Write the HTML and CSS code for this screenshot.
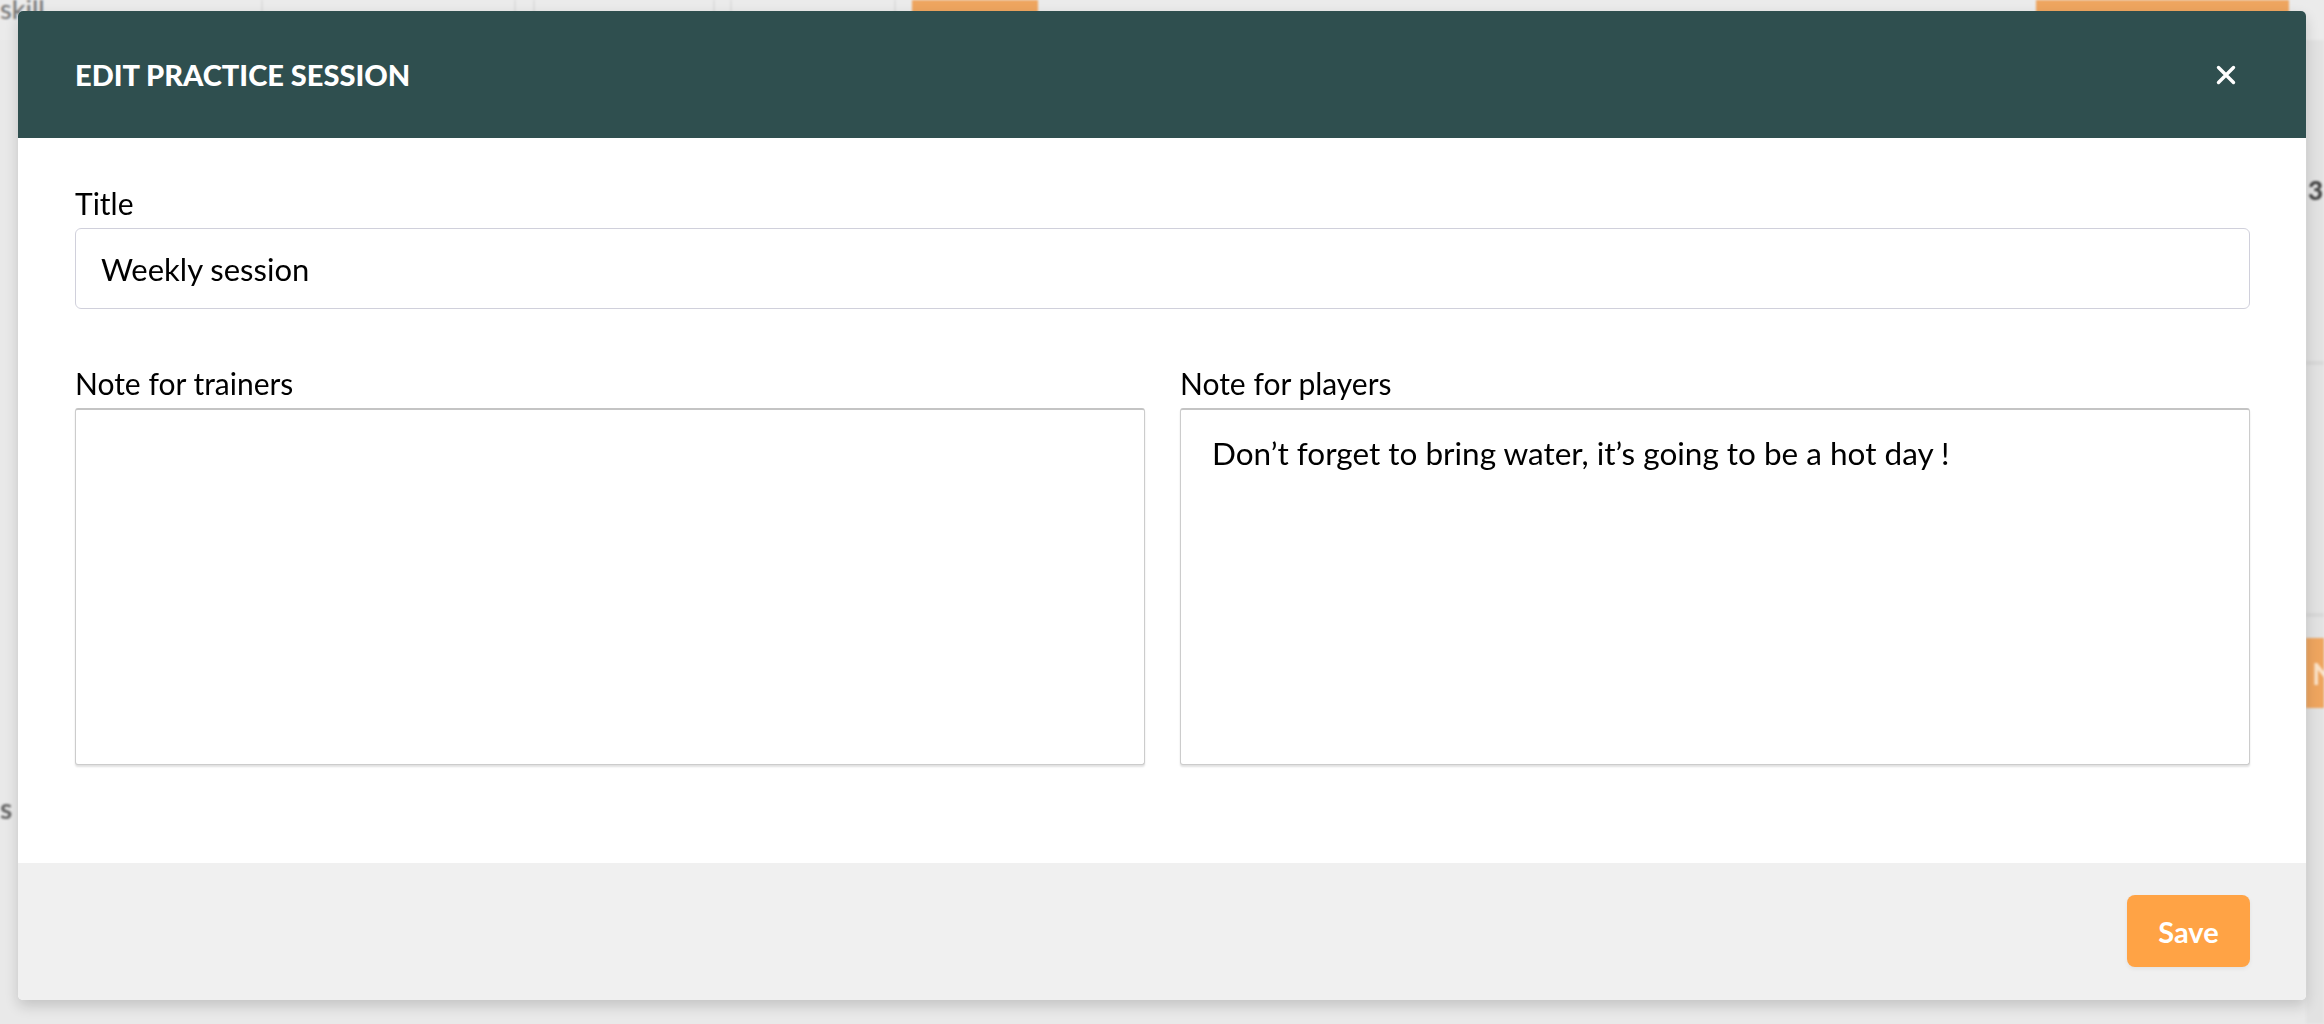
FILE: index.html
```html
<!DOCTYPE html>
<html lang="en">
<head>
<meta charset="utf-8">
<title>Edit practice session</title>
<link rel="stylesheet" href="styles.css">
</head>
<body>
<div class="page">
  <div class="page-top">
    <div class="cell cell-a"><span class="skill">skill</span></div>
    <div class="cell cell-b"></div>
    <div class="cell cell-c"></div>
    <div class="cell cell-d"></div>
    <div class="cell cell-e"></div>
    <div class="cell cell-f"></div>
    <div class="cell cell-btn"></div>
    <div class="cell cell-g"></div>
    <div class="cell cell-btn2"></div>
    <div class="cell cell-h"></div>
  </div>
  <div class="page-main">
    <div class="page-left"><span class="left-s">s</span></div>
    <div class="page-right">
      <span class="num">3</span>
      <div class="sep sep-1"></div>
      <div class="sep sep-2"></div>
      <div class="side-btn">N</div>
    </div>
  </div>
</div>

<div class="overlay">
  <div class="modal">
    <div class="modal-header">
      <h1 class="modal-title">Edit practice session</h1>
      <button class="close" aria-label="Close">
        <svg width="20" height="20" viewBox="0 0 20 20"><path d="M2.5 2.5 L17.5 17.5 M17.5 2.5 L2.5 17.5" stroke="#fff" stroke-width="3.4" stroke-linecap="round" fill="none"/></svg>
      </button>
    </div>
    <div class="modal-body">
      <div class="field">
        <label class="label">Title</label>
        <input class="text-input" type="text" value="Weekly session">
      </div>
      <div class="notes">
        <div class="field note">
          <label class="label">Note for trainers</label>
          <textarea class="textarea"></textarea>
        </div>
        <div class="field note">
          <label class="label">Note for players</label>
          <textarea class="textarea">Don’t forget to bring water, it’s going to be a hot day !</textarea>
        </div>
      </div>
    </div>
    <div class="modal-footer">
      <button class="save">Save</button>
    </div>
  </div>
</div>
</body>
</html>
```

FILE: styles.css
```css
* { box-sizing: border-box; }
html, body { margin: 0; padding: 0; }
body {
  width: 2324px;
  height: 1024px;
  overflow: hidden;
  position: relative;
  background: #e9e9e9;
  font-family: Lato, "Noto Sans", sans-serif;
  color: #000;
}

/* background page (dimmed, blurred) */
.page {
  height: 1024px;
  display: flex;
  flex-direction: column;
  filter: blur(1px);
}
.page-top {
  display: flex;
  height: 40px;
  background: #ebebeb;
}
.cell { border-right: 2px solid #dedede; height: 100%; }
.cell-a { width: 263px; overflow: hidden; }
.skill {
  display: block;
  margin-top: -6px;
  font-size: 27px;
  color: #6f6f6f;
  line-height: 30px;
}
.cell-b { width: 253px; }
.cell-c { width: 19px; }
.cell-d { width: 180px; }
.cell-e { width: 17px; }
.cell-f { width: 164px; }
.cell-btn { width: 126px; background: #eea55f; border-right: none; margin-left: 16px; }
.cell-g { width: 998px; border-right: none; }
.cell-btn2 { width: 253px; background: #eea55f; border-right: none; }
.cell-h { flex: 1; border-right: none; }

.page-main {
  flex: 1;
  display: flex;
  justify-content: space-between;
}
.page-left { width: 18px; padding-top: 751px; }
.left-s { font-size: 28px; font-weight: 700; color: #666; }
.page-right {
  width: 18px;
  display: flex;
  flex-direction: column;
  background: #e2e2e2;
  padding-top: 135px;
}
.num { font-size: 26px; font-weight: 900; color: #444; padding-left: 2px; line-height: 30px; }
.sep { height: 4px; background: #d8d8d8; }
.sep-1 { margin-top: 156px; }
.sep-2 { margin-top: 248px; }
.side-btn {
  margin-top: 21px;
  height: 70px;
  background: #eea55f;
  color: #fbe3c9;
  font-size: 30px;
  font-weight: 700;
  padding-left: 6px;
  line-height: 70px;
  overflow: hidden;
}

/* modal overlay */
.overlay {
  position: absolute;
  inset: 0;
  padding: 11px 18px 24px 18px;
}
.modal {
  height: 989px;
  display: flex;
  flex-direction: column;
  background: #fff;
  border-radius: 5px;
  overflow: hidden;
  box-shadow: 0 6px 14px rgba(0, 0, 0, 0.16);
}
.modal-header {
  height: 127px;
  flex: none;
  background: #2f4f4f;
  display: flex;
  align-items: center;
  justify-content: space-between;
  padding: 0 70px 0 57px;
}
.modal-title {
  margin: 0;
  color: #fff;
  font-size: 29px;
  font-weight: 900;
  text-transform: uppercase;
}
.close {
  border: 0;
  background: none;
  padding: 0;
  width: 20px;
  height: 20px;
  display: flex;
}

.modal-body {
  flex: 1;
  padding: 47px 56px 0 57px;
  display: flex;
  flex-direction: column;
}
.field { display: flex; flex-direction: column; }
.label {
  font-size: 30px;
  line-height: 1.2;
  margin-bottom: 7px;
}
.text-input {
  height: 81px;
  border: 1px solid #d0d0db;
  border-radius: 6px;
  padding: 0 25px;
  font-family: Lato, "Noto Sans", sans-serif;
  font-size: 31px;
  color: #000;
  outline: none;
}
.notes {
  margin-top: 56px;
  display: grid;
  grid-template-columns: 1fr 1fr;
  column-gap: 35px;
}
.textarea {
  height: 357px;
  border: 1px solid #cccccc;
  border-top: 2px solid #c4c4c4;
  border-radius: 3px;
  box-shadow: 0 2px 2px rgba(0, 0, 0, 0.12);
  padding: 25px 31px;
  font-family: Lato, "Noto Sans", sans-serif;
  font-size: 31.5px;
  line-height: 1.2;
  color: #000;
  resize: none;
  outline: none;
}

.modal-footer {
  height: 137px;
  flex: none;
  background: #f0f0f0;
  display: flex;
  align-items: center;
  justify-content: flex-end;
  padding: 0 56px 1px 0;
}
.save {
  width: 123px;
  height: 72px;
  border: 0;
  border-radius: 8px;
  background: #ffa345;
  color: #fff;
  font-family: Lato, "Noto Sans", sans-serif;
  font-size: 29px;
  font-weight: 700;
  box-shadow: 0 2px 4px rgba(0, 0, 0, 0.06);
}
```
